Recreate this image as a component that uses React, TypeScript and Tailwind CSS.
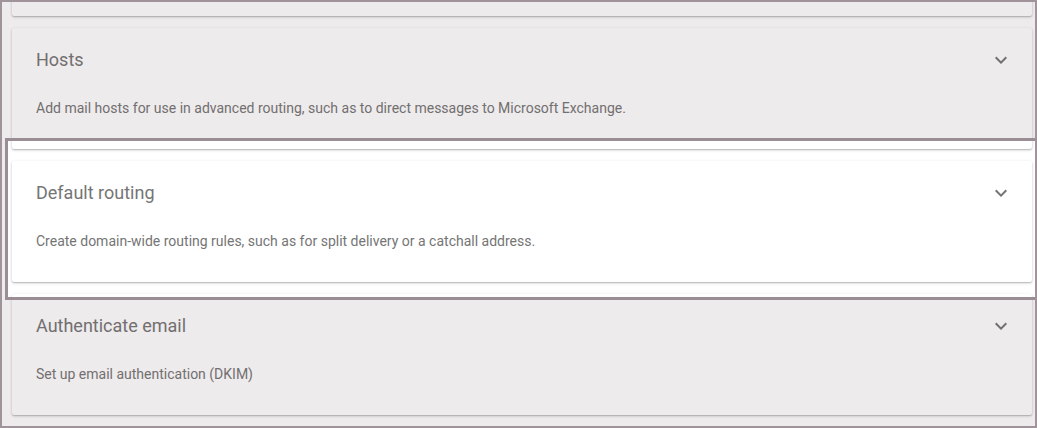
type Section = {
  title: string;
  description: string;
};

const sections: Section[] = [
  {
    title: 'Hosts',
    description:
      'Add mail hosts for use in advanced routing, such as to direct messages to Microsoft Exchange.',
  },
  {
    title: 'Default routing',
    description:
      'Create domain-wide routing rules, such as for split delivery or a catchall address.',
  },
  {
    title: 'Authenticate email',
    description: 'Set up email authentication (DKIM)',
  },
];

const cardClass =
  'h-[121px] rounded-[2px] bg-white shadow-[0_1px_3px_rgba(0,0,0,0.22),0_1px_1px_rgba(0,0,0,0.12)]';

function ExpandIcon() {
  // material "expand_more"
  return (
    <svg width="24" height="24" viewBox="0 0 24 24" className="shrink-0">
      <path
        d="M16.59 8.59L12 13.17 7.41 8.59 6 10l6 6 6-6z"
        fill="#757575"
      />
    </svg>
  );
}

function SettingCard({ section }: { section: Section }) {
  return (
    <div className={`${cardClass} pl-6 pr-[19px] pt-5`}>
      <div className="flex h-6 items-center justify-between">
        <span className="text-[18px] leading-6 text-[#757575]">
          {section.title}
        </span>
        <ExpandIcon />
      </div>
      <p className="mt-[26px] text-[14px] leading-5 text-[#757575]">
        {section.description}
      </p>
    </div>
  );
}

export default function App() {
  return (
    <div
      className="relative h-[428px] w-[1037px] overflow-hidden bg-white"
      style={{ fontFamily: 'Roboto, "Liberation Sans", sans-serif' }}
    >
      <div className="-mt-[105px] flex flex-col gap-3 pl-3 pr-[5px]">
        {/* previous card, scrolled mostly out of view */}
        <div className={cardClass} />
        {sections.map((s) => (
          <SettingCard key={s.title} section={s} />
        ))}
      </div>

      {/* spotlight on the default routing card, everything else dimmed */}
      <div className="pointer-events-none absolute left-[5px] top-[138px] h-[162px] w-[1040px] border-[3px] border-[#9a8d93] shadow-[0_0_0_2000px_rgba(85,55,65,0.1)]" />

      {/* outer frame */}
      <div className="pointer-events-none absolute inset-0 border-2 border-[#a0949a]" />
    </div>
  );
}
